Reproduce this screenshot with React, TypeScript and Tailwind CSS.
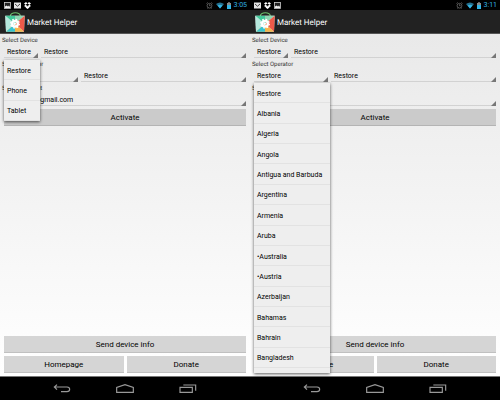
import { useId, type ReactNode } from 'react';

const DEVICES = ['Restore', 'Phone', 'Tablet'];
const OPERATORS = [
  'Restore', 'Albania', 'Algeria', 'Angola', 'Antigua and Barbuda', 'Argentina', 'Armenia',
  'Aruba', '•Australia', '•Austria', 'Azerbaijan', 'Bahamas', 'Bahrain', 'Bangladesh',
];

function ImageIcon() {
  return (
    <svg className="h-[7px] w-[7px]" viewBox="0 0 14 14" aria-hidden="true">
      <rect x="1" y="1" width="12" height="12" fill="#222" stroke="#ccc" strokeWidth="1.6" />
      <path d="M2 12V9l3-2 3 2 2-2 2 3v2z" fill="#eee" />
    </svg>
  );
}

function MailIcon() {
  return (
    <svg className="h-[7px] w-[7px]" viewBox="0 0 14 14" aria-hidden="true">
      <rect x="0" y="1" width="14" height="12" fill="#e4e4e4" />
      <path d="M2 4l5 4.5L12 4" fill="none" stroke="#444" strokeWidth="2" />
    </svg>
  );
}

function DropboxIcon() {
  return (
    <svg className="h-[7px] w-[7px]" viewBox="0 0 14 14" aria-hidden="true">
      <path
        d="M4 0 0 3l3 2.5L7 3zM10 0l4 3-3 2.5L7 3zM0 8l3-2.5L7 8l-3 2.5zM14 8l-3-2.5L7 8l3 2.5zM3 11l4-2.5 4 2.5-4 3z"
        fill="#fff"
      />
    </svg>
  );
}

function StatusIcons() {
  return (
    <>
      <svg className="h-[7px] w-[7px]" viewBox="0 0 14 14" fill="none" stroke="#777" aria-hidden="true">
        <circle cx="7" cy="7.5" r="4.8" strokeWidth="1.4" />
        <path d="M7 4.5v3h2.5M1 3l2.5-2M13 3l-2.5-2M3 13l1.5-2M11 13l-1.5-2" strokeWidth="1.4" />
      </svg>
      <svg className="ml-[3px] h-[7px] w-2" viewBox="0 0 16 14" aria-hidden="true">
        <path d="M0 4Q8-2 16 4L8 13z" fill="#26718f" />
        <path d="M3 7.2Q8 3.4 13 7.2L8 13z" fill="#33b5e5" />
      </svg>
      <svg className="ml-[3px] h-[7px] w-1" viewBox="0 0 8 14" aria-hidden="true">
        <path d="M2.5 0h3v2H8v12H0V2h2.5z" fill="#888" />
        <path d="M0 6h8v8H0z" fill="#33b5e5" />
      </svg>
    </>
  );
}

function MarketLogo() {
  return (
    <svg className="h-5 w-5" viewBox="0 0 60 60" aria-hidden="true">
      <path d="M16 12C18-1 44-1 46 12" fill="none" stroke="#6cc06c" strokeWidth="3.5" />
      <path d="M1 11h58l-2 48H3z" fill="#e8eee9" />
      <path d="M1 11l29 24L3 59z" fill="#b5e8dc" />
      <path d="M1 11h29v24z" fill="#43c99b" />
      <path d="M59 11H30v24z" fill="#8fd6b4" />
      <path d="M59 11 30 35l27 24z" fill="#ee5a4a" />
      <path d="M3 59l27-24 27 24z" fill="#f3b44c" />
      <path d="M3 59l27-24v24z" fill="#35c3cf" />
      <circle cx="30" cy="35" r="8.5" fill="none" stroke="#fff" strokeWidth="7" />
      <circle cx="30" cy="35" r="13" fill="none" stroke="#fff" strokeWidth="4" strokeDasharray="5.1 5.1" />
      <path d="M27 30v10l8-5z" fill="#fff" />
    </svg>
  );
}

function Spinner({ id, label, value, options, className, menu }: {
  id?: string;
  label?: string;
  value: string;
  options?: string[];
  className: string;
  menu?: ReactNode;
}) {
  return (
    <div className={`relative ${className}`}>
      <select
        id={id}
        aria-label={label}
        defaultValue={value}
        className="block h-3 w-full appearance-none border-b border-[#d2d2d2] bg-transparent pt-px pl-[3px] text-[7px] leading-[10px] text-black outline-none"
      >
        {(options ?? [value]).map((o) => (
          <option key={o}>{o}</option>
        ))}
      </select>
      <svg className="pointer-events-none absolute right-0 bottom-0 h-[5px] w-[5px]" viewBox="0 0 5 5" aria-hidden="true">
        <path d="M5 0v5H0z" fill="#777" />
      </svg>
      {menu}
    </div>
  );
}

function Menu({ items, label, className }: { items: string[]; label: string; className: string }) {
  return (
    <div
      role="listbox"
      aria-label={label}
      className={`absolute left-0 z-10 bg-[#eeeeee] shadow-[0_1px_3px_rgba(0,0,0,0.65)] ${className}`}
    >
      <div className="grid h-full auto-rows-fr">
        {items.map((item) => (
          <button
            key={item}
            type="button"
            role="option"
            aria-selected={item === 'Restore'}
            className="min-h-0 border-b border-[#e2e2e2] pt-0.5 pl-[3px] text-left text-[7px] leading-[8px] whitespace-nowrap text-black"
          >
            {item}
          </button>
        ))}
      </div>
    </div>
  );
}

function Field({ label, id, children }: { label: string; id: string; children: ReactNode }) {
  return (
    <div className="mb-0.5">
      <label htmlFor={id} className="block pl-0.5 text-[6px] leading-[10px] text-[#333]">
        {label}
      </label>
      <div className="flex gap-[3px] px-1">{children}</div>
    </div>
  );
}

function Action({ children, className = '' }: { children: ReactNode; className?: string }) {
  return (
    <button
      type="button"
      className={`block h-[17px] border-b pt-px text-center text-[8px] leading-[15px] text-black ${className}`}
    >
      {children}
    </button>
  );
}

function NavBar() {
  return (
    <nav className="flex h-6 shrink-0 items-center justify-center gap-[45px] border-t border-[#777] bg-black">
      <button type="button" aria-label="Back">
        <svg className="h-[9px] w-[18px]" viewBox="0 0 54 27" fill="none" stroke="#999" strokeWidth="3.5">
          <path d="M12 2 4 9l8 8M4 9h38q8 0 8 7t-8 7H24" />
        </svg>
      </button>
      <button type="button" aria-label="Home">
        <svg className="h-[9px] w-[18px]" viewBox="0 0 54 27" fill="none" stroke="#999" strokeWidth="3.5">
          <path d="M2 25V10l25-8 25 8v15z" />
        </svg>
      </button>
      <button type="button" aria-label="Recent apps">
        <svg className="h-[9px] w-[18px]" viewBox="0 0 54 27" fill="none" stroke="#999" strokeWidth="3.5">
          <path d="M3 10h37v15H3zM13 3h37v17" />
        </svg>
      </button>
    </nav>
  );
}

function Phone({ time, notifications, account, open }: {
  time: string;
  notifications: ReactNode;
  account: string;
  open: 'device' | 'operator';
}) {
  const id = useId();
  return (
    <section className="flex min-w-0 flex-col">
      <div className="flex h-[10px] shrink-0 items-center bg-black pr-[3px] pl-1">
        <div className="flex flex-1 gap-[3px]">{notifications}</div>
        <StatusIcons />
        <time className="ml-[3px] text-[7px] leading-[10px] text-[#33b5e5]">{time}</time>
      </div>
      <header className="flex h-6 shrink-0 items-center gap-0.5 border-b border-[#555] bg-[#222] pl-[5px]">
        <MarketLogo />
        <h1 className="pt-0.5 text-[8px] leading-[10px] text-white">Market Helper</h1>
      </header>
      <main className="flex flex-1 flex-col bg-linear-to-b from-[#e9e9e9] to-white pt-0.5 pb-[3px]">
        <Field label="Select Device" id={`${id}-device`}>
          <Spinner
            id={`${id}-device`}
            value="Restore"
            options={DEVICES}
            className="w-[34px]"
            menu={open === 'device' && <Menu items={DEVICES} label="Devices" className="top-[14px] h-[61px] w-9" />}
          />
          <Spinner label="Device model" value="Restore" className="flex-1" />
        </Field>
        <Field label="Select Operator" id={`${id}-operator`}>
          <Spinner
            id={`${id}-operator`}
            value="Restore"
            options={OPERATORS}
            className="w-[74px]"
            menu={
              open === 'operator' && (
                <Menu items={OPERATORS} label="Operators" className="top-[13px] h-[290px] w-[76px] pb-[5px]" />
              )
            }
          />
          <Spinner label="Network" value="Restore" className="flex-1" />
        </Field>
        <Field label="Select Account" id={`${id}-account`}>
          <Spinner
            id={`${id}-account`}
            value={account}
            className={account ? 'flex-1 [&>select]:pl-[30px]' : 'flex-1'}
          />
        </Field>
        <Action className="mx-1 mt-px border-[#b4b4b4] bg-[#cbcbcb]">Activate</Action>
        <div className="mt-auto grid grid-cols-2 gap-[3px] px-1">
          <Action className="col-span-2 border-[#c0c0c0] bg-[#d5d5d5]">Send device info</Action>
          <Action className="border-[#c0c0c0] bg-[#d5d5d5]">Homepage</Action>
          <Action className="border-[#c0c0c0] bg-[#d5d5d5]">Donate</Action>
        </div>
      </main>
      <NavBar />
    </section>
  );
}

export default function App() {
  return (
    <div className="grid min-h-screen grid-cols-2 bg-black font-['Roboto',sans-serif] [text-rendering:geometricPrecision]">
      <Phone
        time="3:05"
        open="device"
        account="@gmail.com"
        notifications={<><ImageIcon /><MailIcon /><DropboxIcon /></>}
      />
      <Phone
        time="3:11"
        open="operator"
        account=""
        notifications={<><MailIcon /><DropboxIcon /><ImageIcon /></>}
      />
    </div>
  );
}
